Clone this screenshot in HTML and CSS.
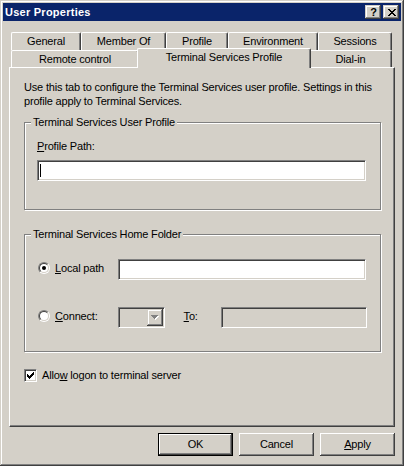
FILE: index.html
```html
<!DOCTYPE html>
<html>
<head>
<meta charset="utf-8">
<title>User Properties</title>
<link rel="stylesheet" href="styles.css">
</head>
<body>
<div class="window">
  <div class="titlebar">
    <span class="title">User Properties</span>
    <div class="caption-btns">
      <span class="cbtn help">?</span>
      <span class="cbtn close">
        <svg width="8" height="7" viewBox="0 0 8 7"><path d="M0 0h2v1h-2zM6 0h2v1h-2zM1 1h2v1h-2zM5 1h2v1h-2zM2 2h4v1h-4zM3 3h2v1h-2zM2 4h4v1h-4zM1 5h2v1h-2zM5 5h2v1h-2zM0 6h2v1h-2zM6 6h2v1h-2z" fill="#000"/></svg>
      </span>
    </div>
  </div>
  <div class="body">
    <div class="tabrow row1">
      <div class="tab t-general">General</div>
      <div class="tab t-member">Member Of</div>
      <div class="tab t-profile">Profile</div>
      <div class="tab t-env">Environment</div>
      <div class="tab t-sessions">Sessions</div>
    </div>
    <div class="tabrow row2">
      <div class="tab t-remote">Remote control</div>
      <div class="tab t-tsp sel">Terminal Services Profile</div>
      <div class="tab t-dial">Dial-in</div>
    </div>
    <div class="panel">
      <p class="desc">Use this tab to configure the Terminal Services user profile. Settings in this<br>profile apply to Terminal Services.</p>
      <div class="group g1">
        <div class="legend">Terminal Services User Profile</div>
        <div class="lbl"><u>P</u>rofile Path:</div>
        <div class="edit path-edit"><span class="caret"></span></div>
      </div>
      <div class="group g2">
        <div class="legend">Terminal Services Home Folder</div>
        <div class="row row-local">
          <div class="opt">
            <span class="radio"><span class="ring"><span class="dot"></span></span></span>
            <span><u>L</u>ocal path</span>
          </div>
          <div class="edit local-edit"></div>
        </div>
        <div class="row row-connect">
          <div class="opt">
            <span class="radio"><span class="ring"></span></span>
            <span><u>C</u>onnect:</span>
          </div>
          <div class="combo">
            <span class="combo-btn">
              <svg width="8" height="5" viewBox="0 0 8 5"><path d="M1 1h7v1h-7zM2 2h5v1h-5zM3 3h3v1h-3zM4 4h1v1h-1z" fill="#fff"/><path d="M0 0h7v1h-7zM1 1h5v1h-5zM2 2h3v1h-3zM3 3h1v1h-1z" fill="#808080"/></svg>
            </span>
          </div>
          <span class="to"><u>T</u>o:</span>
          <div class="edit disabled to-edit"></div>
        </div>
      </div>
      <div class="check-row">
        <span class="checkbox">
          <svg width="7" height="7" viewBox="0 0 7 7"><path d="M6 0h1v1h-1zM5 1h2v1h-2zM0 2h1v1h-1zM4 2h3v1h-3zM0 3h2v1h-2zM3 3h3v1h-3zM0 4h5v1h-5zM1 5h3v1h-3zM2 6h1v1h-1z" fill="#000"/></svg>
        </span>
        <span>Allo<u>w</u> logon to terminal server</span>
      </div>
    </div>
    <div class="buttons">
      <div class="btn default"><span class="btn-inner">OK</span></div>
      <div class="btn"><span class="btn-inner">Cancel</span></div>
      <div class="btn"><span class="btn-inner"><u>A</u>pply</span></div>
    </div>
  </div>
</div>
</body>
</html>
```
FILE: styles.css
```css
* { box-sizing: border-box; }

html, body {
  margin: 0;
  padding: 0;
  background: #d4d0c8;
}

body {
  font-family: "Liberation Sans", Arial, sans-serif;
  font-size: 11px;
  letter-spacing: -0.18px;
  color: #000;
  line-height: 13px;
}

u { text-decoration: underline; text-underline-offset: 1px; }

.window {
  width: 404px;
  height: 466px;
  padding: 3px;
  background: #d4d0c8;
  box-shadow: inset -1px -1px #404040, inset 1px 1px #d4d0c8, inset -2px -2px #808080, inset 2px 2px #fff;
}

.titlebar {
  height: 18px;
  background: #0a246a;
  display: flex;
  align-items: center;
  justify-content: space-between;
  padding: 0 2px 0 2px;
}

.title {
  color: #fff;
  font-weight: bold;
  letter-spacing: 0.25px;
}

.caption-btns {
  display: flex;
  gap: 2px;
}

.cbtn {
  width: 16px;
  height: 14px;
  background: #d4d0c8;
  box-shadow: inset -1px -1px #404040, inset 1px 1px #d4d0c8, inset -2px -2px #808080, inset 2px 2px #fff;
  display: flex;
  align-items: center;
  justify-content: center;
}

.help {
  font-weight: bold;
  font-size: 11px;
  letter-spacing: 0;
  padding-left: 1px;
}

.close svg { margin-left: 1px; }

.body {
  padding: 11px 6px 0 6px;
}

.tabrow {
  display: flex;
  margin: 0 3px 0 2px;
}

.row1 { height: 18px; }
.row2 { height: 17px; }

.tab {
  height: 100%;
  border-top: 1px solid #fff;
  border-left: 1px solid #fff;
  border-right: 1px solid #404040;
  border-radius: 2px 2px 0 0;
  box-shadow: inset -1px 0 #808080;
  display: flex;
  align-items: center;
  justify-content: center;
  white-space: nowrap;
  background: #d4d0c8;
}

.t-general { width: 70px; }
.t-member { width: 85px; }
.t-profile { width: 62px; }
.t-env { width: 90px; }
.t-sessions { width: 74px; }
.t-remote { width: 128px; }
.t-tsp { width: 170px; }
.t-dial { width: 83px; }

.tab.sel {
  width: 174px;
  height: 20px;
  margin: -2px -2px 0 -2px;
  padding-bottom: 2px;
  position: relative;
  z-index: 1;
}

.panel {
  height: 360px;
  border: 1px solid;
  border-color: #fff #404040 #404040 #fff;
  box-shadow: inset -1px -1px #808080;
  padding: 12px 13px 0 14px;
}

.desc {
  margin: 0;
  line-height: 14px;
  white-space: nowrap;
}

.group {
  border: 1px solid #808080;
  box-shadow: 1px 1px 0 #fff, inset 1px 1px 0 #fff;
  padding: 0 13px 0 12px;
}

.g1 {
  margin-top: 14px;
  padding-bottom: 28px;
}

.g2 {
  margin-top: 24px;
  padding-bottom: 23px;
}

.legend {
  width: fit-content;
  margin: -7px 0 0 -6px;
  padding: 0 2px;
  background: #d4d0c8;
  line-height: 13px;
  white-space: nowrap;
}

.lbl {
  margin-top: 11px;
}

.edit {
  height: 21px;
  background: #fff;
  border: 1px solid;
  border-color: #808080 #fff #fff #808080;
  box-shadow: inset 1px 1px #404040, inset -1px -1px #d4d0c8;
  display: flex;
  align-items: center;
  padding-left: 2px;
}

.edit.disabled { background: #d4d0c8; }

.path-edit {
  margin-top: 7px;
  width: 329px;
}

.caret {
  width: 1px;
  height: 13px;
  background: #000;
}

.row {
  display: flex;
  align-items: center;
  height: 21px;
}

.row-local { margin-top: 18px; }
.row-connect { margin-top: 27px; }

.opt {
  width: 80px;
  margin-left: 1px;
  margin-bottom: 3px;
  display: flex;
  align-items: center;
  gap: 5px;
  white-space: nowrap;
}

.radio {
  width: 12px;
  height: 12px;
  border-radius: 50%;
  border: 1px solid;
  border-color: #808080 #fff #fff #808080;
  display: flex;
}

.ring {
  flex: 1;
  border-radius: 50%;
  border: 1px solid;
  border-color: #404040 #d4d0c8 #d4d0c8 #404040;
  background: #fff;
  display: flex;
  align-items: center;
  justify-content: center;
}

.dot {
  width: 4px;
  height: 4px;
  border-radius: 50%;
  background: #000;
}

.local-edit { width: 248px; }

.combo {
  width: 47px;
  height: 21px;
  background: #d4d0c8;
  border: 1px solid;
  border-color: #808080 #fff #fff #808080;
  box-shadow: inset 1px 1px #404040, inset -1px -1px #d4d0c8;
  padding: 1px;
  display: flex;
  justify-content: flex-end;
}

.combo-btn {
  width: 16px;
  height: 17px;
  background: #d4d0c8;
  box-shadow: inset -1px -1px #404040, inset 1px 1px #d4d0c8, inset -2px -2px #808080, inset 2px 2px #fff;
  display: flex;
  align-items: center;
  justify-content: center;
}

.to {
  width: 38px;
  margin-left: 19px;
  margin-bottom: 3px;
}

.to-edit { width: 146px; }

.check-row {
  margin-top: 17px;
  display: flex;
  align-items: center;
  gap: 5px;
  height: 13px;
  white-space: nowrap;
}

.checkbox {
  width: 13px;
  height: 13px;
  background: #fff;
  border: 1px solid;
  border-color: #808080 #fff #fff #808080;
  box-shadow: inset 1px 1px #404040, inset -1px -1px #d4d0c8;
  display: flex;
  align-items: center;
  justify-content: center;
}

.buttons {
  display: flex;
  justify-content: flex-end;
  gap: 6px;
  margin-top: 6px;
}

.btn {
  width: 75px;
  height: 23px;
  display: flex;
}

.btn-inner {
  flex: 1;
  display: flex;
  align-items: center;
  justify-content: center;
  background: #d4d0c8;
  box-shadow: inset -1px -1px #404040, inset 1px 1px #fff, inset -2px -2px #808080, inset 2px 2px #d4d0c8;
}

.btn.default {
  border: 1px solid #000;
}
```
